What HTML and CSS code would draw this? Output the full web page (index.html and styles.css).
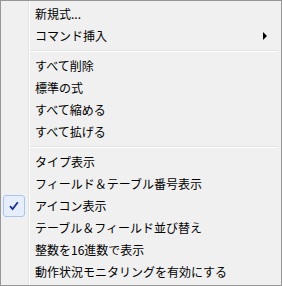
FILE: index.html
```html
<!DOCTYPE html>
<html lang="ja">
<head>
    <meta charset="UTF-8">
    <title>コンテキストメニュー</title>
    <link rel="stylesheet" href="styles.css">
</head>
<body>
    <div class="menu">
        <div class="item"><span class="icon"></span><span class="label">新規式...</span></div>
        <div class="item"><span class="icon"></span><span class="label">コマンド挿入</span><span class="arrow"></span></div>
        <div class="sep"></div>
        <div class="item"><span class="icon"></span><span class="label">すべて削除</span></div>
        <div class="item"><span class="icon"></span><span class="label">標準の式</span></div>
        <div class="item"><span class="icon"></span><span class="label">すべて縮める</span></div>
        <div class="item"><span class="icon"></span><span class="label">すべて拡げる</span></div>
        <div class="sep"></div>
        <div class="item"><span class="icon"></span><span class="label">タイプ表示</span></div>
        <div class="item"><span class="icon"></span><span class="label">フィールド＆テーブル番号表示</span></div>
        <div class="item">
            <span class="icon checked">
                <svg width="10" height="10" viewBox="0 0 10 10">
                    <path d="M1 5.2 L3.6 8 L8.8 1.2" fill="none" stroke="#1c2f8c" stroke-width="1.8"/>
                </svg>
            </span>
            <span class="label">アイコン表示</span>
        </div>
        <div class="item"><span class="icon"></span><span class="label">テーブル＆フィールド並び替え</span></div>
        <div class="item"><span class="icon"></span><span class="label">整数を16進数で表示</span></div>
        <div class="item"><span class="icon"></span><span class="label">動作状況モニタリングを有効にする</span></div>
    </div>
</body>
</html>
```

FILE: styles.css
```css
body {
    margin: 0;
    font-family: "Noto Sans CJK JP", "Noto Sans", sans-serif;
    font-size: 12px;
    color: #000;
}

.menu {
    width: 282px;
    height: 286px;
    box-sizing: border-box;
    border: 1px solid #979797;
    padding: 2px;
    background:
        linear-gradient(to right, transparent 27px, #e2e3e3 27px, #e2e3e3 28px, #fff 28px, #fff 29px, transparent 29px),
        #f0f0f0;
}

.item {
    display: flex;
    align-items: center;
    height: 22px;
}

.icon {
    width: 22px;
    height: 22px;
    box-sizing: border-box;
    margin-right: 10px;
    display: flex;
    align-items: center;
    justify-content: center;
}

.icon.checked {
    border: 1px solid #a8c6ec;
    border-radius: 3px;
    background: #e6eefb;
}

.label {
    flex: 1;
    line-height: 22px;
    white-space: nowrap;
}

.arrow {
    width: 0;
    height: 0;
    border-top: 4px solid transparent;
    border-bottom: 4px solid transparent;
    border-left: 4px solid #000;
    margin-right: 12px;
}

.sep {
    height: 8px;
    margin-left: 27px;
    margin-right: 1px;
    display: flex;
    flex-direction: column;
    justify-content: center;
}

.sep::before {
    content: "";
    display: block;
    height: 1px;
    background: #e2e3e3;
    border-bottom: 1px solid #fff;
}
```
